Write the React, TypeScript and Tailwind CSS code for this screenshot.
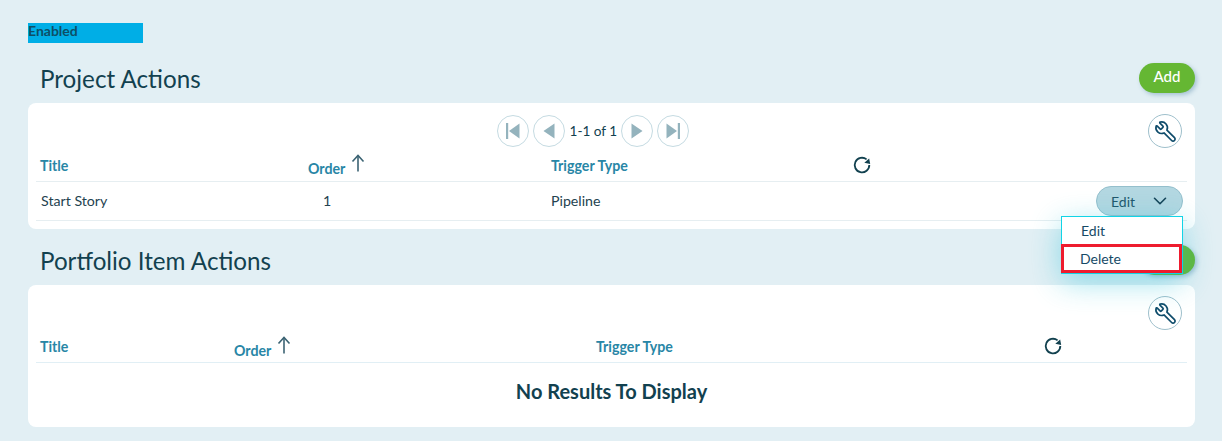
import { ChevronDown, Wrench } from "lucide-react";

/* ===============================
   SMALL PIECES
   =============================== */

function PagerButton({ kind }: { kind: "first" | "prev" | "next" | "last" }) {
  return (
    <button className="w-8 h-8 rounded-full border border-[#c5dbe2] bg-white flex items-center justify-center shrink-0">
      <svg width="20" height="20" viewBox="0 0 20 20" fill="#94b3bd">
        {kind === "first" && (
          <>
            <rect x="3" y="2" width="2.2" height="16" />
            <path d="M16.5 2.5v15L6 10z" />
          </>
        )}
        {kind === "prev" && <path d="M15.5 2.5v15L4.5 10z" />}
        {kind === "next" && <path d="M4.5 2.5v15L15.5 10z" />}
        {kind === "last" && (
          <>
            <path d="M3.5 2.5v15L14 10z" />
            <rect x="14.8" y="2" width="2.2" height="16" />
          </>
        )}
      </svg>
    </button>
  );
}

function ToolsButton() {
  return (
    <button className="w-[34px] h-[34px] rounded-full border border-[#9fc0cc] bg-white flex items-center justify-center">
      <Wrench className="w-[23px] h-[23px] text-[#0f4c6b] -scale-x-100" strokeWidth={1.75} />
    </button>
  );
}

function RefreshIcon() {
  return (
    <svg width="20" height="20" viewBox="0 0 20 20" fill="none" className="text-[#12414f] -translate-x-px">
      <path
        d="M14.6 4.4A7.3 7.3 0 1 0 17.3 10"
        stroke="currentColor"
        strokeWidth="1.8"
        strokeLinecap="butt"
      />
      <path d="M12.6 8.4 L18.6 8.4 L16.6 3.2 Z" fill="currentColor" transform="rotate(10 15.6 6.5)" />
    </svg>
  );
}

function SortArrow() {
  return (
    <svg width="14" height="18" viewBox="0 0 14 18" fill="none" stroke="#3b6373" strokeWidth="1.6">
      <path d="M7 1.5V17.5" />
      <path d="M1.5 7.5 L7 1.5 L12.5 7.5" />
    </svg>
  );
}

function SectionHeader({ title, mt }: { title: string; mt: string }) {
  return (
    <div className={`flex items-center justify-between h-[30px] pl-3 ${mt}`}>
      <h2 className="text-[24.2px] leading-[30px] pt-px text-[#12414f]">{title}</h2>
      <button className="w-14 h-[30px] rounded-full bg-[#65b733] text-white text-[15px] font-medium pb-1 shadow-[2px_2px_4px_rgba(90,140,170,0.45)]">
        Add
      </button>
    </div>
  );
}

function HeaderCell({ label }: { label: string }) {
  return <span className="text-[14.2px] font-bold text-[#2886a6] translate-y-px">{label}</span>;
}

function OrderCell() {
  return (
    <span className="flex items-end gap-1.5">
      <span className="text-[14.2px] font-bold text-[#2886a6] leading-4 translate-y-0.5">Order</span>
      <span className="mb-[3px]">
        <SortArrow />
      </span>
    </span>
  );
}

/* ===============================
   PAGE
   =============================== */

export default function App() {
  return (
    <div
      className="relative w-[1222px] h-[441px] overflow-hidden bg-[#e2eff4] pl-7 pr-[27px] pt-[23px]"
      style={{ fontFamily: "Lato, sans-serif" }}
    >
      <div className="w-[115px] h-5 bg-[#00aee6] text-[14px] leading-4 font-bold text-[#0d4f66]">
        Enabled
      </div>

      <SectionHeader title="Project Actions" mt="mt-5" />

      {/* PROJECT ACTIONS CARD */}
      <div className="mt-2.5 h-[126px] bg-white rounded-lg px-2 relative">
        <div className="flex justify-center items-center gap-1 pt-3 h-[44px] pr-[38px]">
          <PagerButton kind="first" />
          <PagerButton kind="prev" />
          <span className="w-[46px] text-center text-[13.6px] text-[#12414f] mx-px whitespace-nowrap">1-1 of 1</span>
          <PagerButton kind="next" />
          <PagerButton kind="last" />
        </div>
        <div className="absolute right-[13px] top-[11px]">
          <ToolsButton />
        </div>

        <div className="grid grid-cols-[268px_243px_302px_1fr] h-[35px] pt-0.5 pl-1 border-b border-[#e6eef1] items-center">
          <HeaderCell label="Title" />
          <div className="-translate-y-[1px]"><OrderCell /></div>
          <HeaderCell label="Trigger Type" />
          <RefreshIcon />
        </div>

        <div className="grid grid-cols-[268px_243px_1fr_auto] h-[39px] pl-[5px] pr-[4px] border-b border-[#e6eef1] items-center text-[14.2px] text-[#24424f]">
          <span>Start Story</span>
          <span className="pl-[14px]">1</span>
          <span className="-translate-x-px">Pipeline</span>
          <button className="w-[87px] h-[30px] rounded-full bg-[#b3d7e1] border border-[#94bfcc] flex items-center pl-[14px] gap-3.5 text-[14px] text-[#21566b]">
            Edit
            <ChevronDown className="w-[22px] h-[22px] text-[#164458]" strokeWidth={1.75} />
          </button>
        </div>
      </div>

      <SectionHeader title="Portfolio Item Actions" mt="mt-4" />

      {/* PORTFOLIO ITEM ACTIONS CARD */}
      <div className="mt-2.5 h-[142px] bg-white rounded-lg px-2 relative">
        <div className="flex justify-end pt-[11px] pr-[5px] h-[45px]">
          <ToolsButton />
        </div>
        <div className="grid grid-cols-[194px_363px_447px_1fr] h-[33px] pl-1 border-b border-[#e1eff5] items-center">
          <HeaderCell label="Title" />
          <OrderCell />
          <div className="-translate-x-px"><HeaderCell label="Trigger Type" /></div>
          <RefreshIcon />
        </div>
        <div className="pt-4 text-center text-[20px] font-bold leading-6 text-[#12414f]">
          No Results To Display
        </div>
      </div>

      {/* OPEN ROW MENU */}
      <div className="absolute left-[1061px] top-[216px] w-[122px] h-[58px] bg-white border border-[#12d4e6] shadow-[0_8px_30px_rgba(30,190,215,0.45)] text-[14px] text-[#164a66]">
        <div className="h-[27px] pl-[19px] flex items-center">Edit</div>
        <div className="h-[29px] pl-[16px] flex items-center border-[3px] border-[#ee1c2e] -ml-px w-[121px]">
          Delete
        </div>
      </div>
    </div>
  );
}
